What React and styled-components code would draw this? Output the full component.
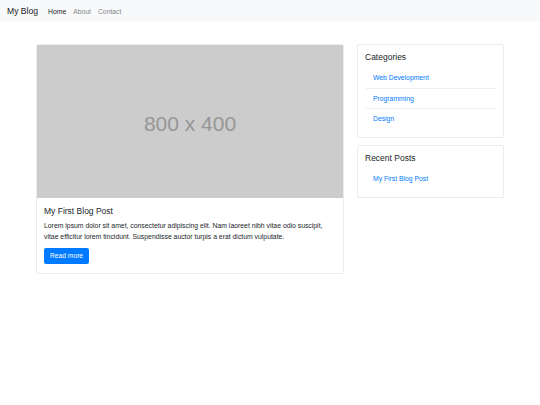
import styled, { createGlobalStyle } from 'styled-components';

const GlobalStyle = createGlobalStyle`
	* { box-sizing: border-box; }
	body {
		margin: 0;
		font-family: "Liberation Sans", Arial, sans-serif;
		color: #212529;
		background: #fff;
	}
`

const Navbar = styled.nav`
	height: 22px;
	background: #f8f9fa;
	display: flex;
	align-items: center;
	padding: 0 7px;
`

const Brand = styled.a`
	font-size: 8.6px;
	color: #1d2125;
	margin-right: 10px;
`

const NavLink = styled.a`
	font-size: 6.8px;
	color: ${props => props.active ? '#212529' : '#85888b'};
	margin-right: 7px;
`

const Container = styled.div`
	width: 468px;
	margin: 22px auto 0;
	display: flex;
	gap: 13px;
	align-items: flex-start;
`

const Main = styled.main`
	width: 308px;
`

const Aside = styled.aside`
	width: 147px;
	display: flex;
	flex-direction: column;
	gap: 7px;
`

const Card = styled.div`
	border: 1px solid #ebebeb;
	border-radius: 2px;
	background: #fff;
	overflow: hidden;
`

const Placeholder = styled.div`
	height: 153px;
	padding-top: 5px;
	background: #cccccc;
	display: flex;
	align-items: center;
	justify-content: center;
	font-size: 21px;
	color: #969696;
`

const CardBody = styled.div`
	padding: ${props => props.pad || '7.5px 7px 9px'};
`

const Title = styled.h5`
	margin: 0 0 ${props => props.gap || '4px'};
	font-size: 8.5px;
	font-weight: 400;
	line-height: 11px;
`

const Text = styled.p`
	margin: 0 0 6.5px;
	font-size: 6.85px;
	line-height: 11px;
`

const Button = styled.a`
	display: block;
	width: fit-content;
	background: #007bff;
	color: #fff;
	font-size: 6.7px;
	line-height: 16px;
	padding: 0 6px;
	border-radius: 2px;
`

const List = styled.ul`
	list-style: none;
	margin: 0;
	padding: 0 0 0 1px;
`

const Item = styled.li`
	padding: 0 7px;
	height: 20.5px;
	display: flex;
	align-items: center;
	font-size: 6.8px;
	color: #007bff;
	border-top: ${props => props.first ? 'none' : '1px solid #eeeeee'};
`

export default function App() {
	return (
		<>
			<GlobalStyle />
			<Navbar>
				<Brand>My Blog</Brand>
				<NavLink active>Home</NavLink>
				<NavLink>About</NavLink>
				<NavLink>Contact</NavLink>
			</Navbar>

			<Container>
				<Main>
					<Card>
						<Placeholder>800 x 400</Placeholder>
						<CardBody>
							<Title gap="3px">My First Blog Post</Title>
							<Text>Lorem ipsum dolor sit amet, consectetur adipiscing elit. Nam laoreet nibh vitae odio suscipit, vitae efficitur lorem tincidunt. Suspendisse auctor turpis a erat dictum vulputate.</Text>
							<Button>Read more</Button>
						</CardBody>
					</Card>
				</Main>

				<Aside>
					<Card>
						<CardBody pad="6.5px 7px 8.5px">
							<Title gap="4.5px">Categories</Title>
							<List>
								<Item first>Web Development</Item>
								<Item>Programming</Item>
								<Item>Design</Item>
							</List>
						</CardBody>
					</Card>
					<Card>
						<CardBody pad="6.5px 7px 8px">
							<Title gap="5px">Recent Posts</Title>
							<List>
								<Item first>My First Blog Post</Item>
							</List>
						</CardBody>
					</Card>
				</Aside>
			</Container>
		</>
	)
}
